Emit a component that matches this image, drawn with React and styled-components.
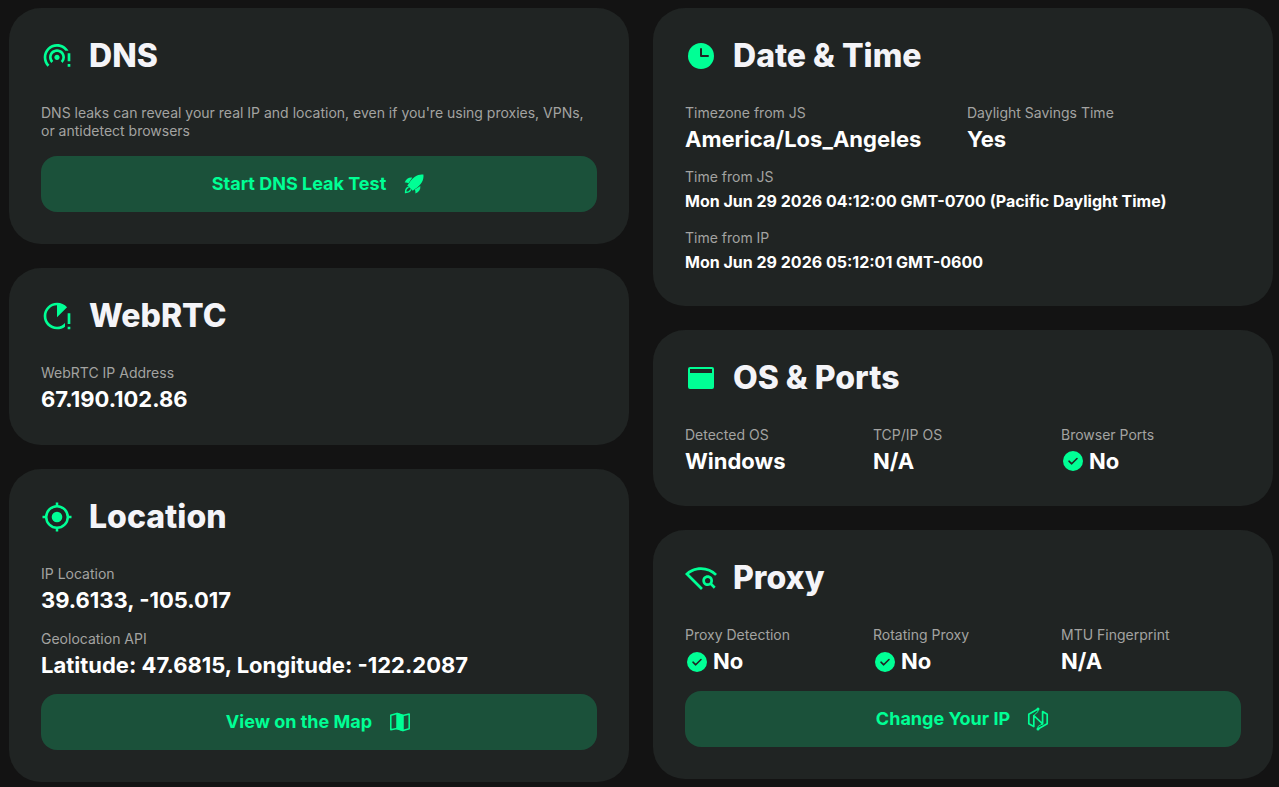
import React from "react";
import styled, { createGlobalStyle } from "styled-components";
import {
  MdOutlineWifiTetheringErrorRounded,
  MdRunningWithErrors,
  MdOutlineWifiFind,
} from "react-icons/md";

const GlobalStyle = createGlobalStyle`
  *, *::before, *::after { box-sizing: border-box; }
  body {
    margin: 0;
    background: #131313;
    color: #fff;
    font-family: Inter, "Liberation Sans", sans-serif;
  }
`;

const Page = styled.main`
  display: grid;
  grid-template-columns: repeat(2, minmax(0, 1fr));
  gap: 24px;
  align-items: start;
  padding: 8px 6px 4px 9px;
`;

const Column = styled.div`
  display: flex;
  flex-direction: column;
  gap: 24px;
`;

const Card = styled.section`
  display: flex;
  flex-direction: column;
  gap: 16px;
  padding: 32px;
  border-radius: 32px;
  background: #202423;
`;

const CardHeader = styled.header`
  display: flex;
  align-items: center;
  gap: 16px;
  height: 32px;
  margin-bottom: 16px;
  color: #00ff95;
  svg {
    flex: none;
    width: 32px;
    height: 32px;
  }
`;

const Title = styled.h2`
  margin: 0;
  color: #f4f4f8;
  font-size: 32px;
  line-height: 32px;
  font-weight: 800;
`;

const Fields = styled.dl`
  display: grid;
  grid-template-columns: repeat(${(p) => p.$columns || 1}, minmax(0, 1fr));
  gap: 16px 8px;
  margin: 0;
`;

const Muted = styled.p`
  margin: 0;
  color: #a3a3a1;
  font-size: 14px;
  line-height: 18px;
`;

const FieldValue = styled.dd`
  display: flex;
  align-items: center;
  gap: 4px;
  margin: 4px 0 0;
  font-size: ${(p) => (p.$small ? 16 : 22)}px;
  line-height: ${(p) => (p.$small ? 23 : p.$tight ? 26 : 27)}px;
  font-weight: 700;
  svg {
    flex: none;
    width: 24px;
    height: 24px;
  }
`;

const Action = styled.button`
  display: flex;
  align-items: center;
  justify-content: center;
  gap: 16px;
  width: 100%;
  height: 56px;
  padding: 0 16px;
  border: 0;
  border-radius: 16px;
  background: #1b513a;
  color: #00ff95;
  font: 700 18px/24px Inter, "Liberation Sans", sans-serif;
  cursor: pointer;
  svg {
    flex: none;
    width: 24px;
    height: 24px;
  }
`;

const LocationIcon = () => (
  <svg viewBox="0 0 32 32" fill="none" stroke="currentColor" aria-hidden="true">
    <circle cx="16" cy="16" r="10.8" strokeWidth="2.5" />
    <circle cx="16" cy="16" r="5.3" fill="currentColor" stroke="none" />
    <path d="M16 1.500v4M16 26.500v4M1.500 16h4M26.500 16h4" strokeWidth="2.500" />
  </svg>
);

const ClockIcon = () => (
  <svg viewBox="0 0 32 32" fill="none" aria-hidden="true">
    <circle cx="16" cy="16" r="13" fill="currentColor" />
    <path d="M16 9v7h7" stroke="#202423" strokeWidth="2" strokeLinecap="round" strokeLinejoin="round" />
  </svg>
);

const WindowIcon = () => (
  <svg viewBox="0 0 32 32" aria-hidden="true">
    <path
      fill="currentColor"
      fillRule="evenodd"
      d="M5 5h22a2 2 0 0 1 2 2v18a2 2 0 0 1-2 2H5a2 2 0 0 1-2-2V7a2 2 0 0 1 2-2zm0 2v4h22V7z"
    />
  </svg>
);

const CheckIcon = () => (
  <svg viewBox="0 0 24 24" fill="none" aria-hidden="true">
    <circle cx="12" cy="12" r="10" fill="#00ff95" />
    <path d="M8 12.2l2.7 2.6L16 9.5" stroke="#202423" strokeWidth="1.600" strokeLinecap="round" strokeLinejoin="round" />
  </svg>
);

const RocketIcon = () => (
  <svg viewBox="0 0 24 24" fill="currentColor" aria-hidden="true">
    <path d="M21.400 2.600C16 1.900 11 4.700 7 11.200l-1.700 2.200 5.500 5.400 2.200-1.700C19.400 13 22.100 8 21.400 2.600z" />
    <path d="M10.200 5.700C6.800 5.200 4.200 7 2.700 10.600c1.400-.2 2.700 0 3.800.6zM18.300 13.900c.5 3.400-1.300 6-4.900 7.500.2-1.400 0-2.700-.6-3.800z" />
    <path d="M6.100 15.500c-1.600.5-2.500 2.500-2.500 4.900 2.400 0 4.400-.9 4.900-2.500" fill="none" stroke="currentColor" strokeWidth="1.500" strokeLinecap="round" />
  </svg>
);

const MapIcon = () => (
  <svg viewBox="0 0 24 24" fill="none" stroke="currentColor" strokeWidth="1.500" strokeLinejoin="round" aria-hidden="true">
    <path d="M2.800 5.200L9 3.500l6 2 6.200-1.400v14.700L15 20.500l-6-2-6.200 1.200z" />
    <path d="M9 3.500l6 2v15l-6-2z" fill="currentColor" />
  </svg>
);

const NodeIcon = () => (
  <svg viewBox="0 0 24 24" fill="none" stroke="currentColor" strokeWidth="1.700" strokeLinejoin="round" aria-hidden="true">
    <path d="M12 2L2.800 7.200v9.600l5 2.700V8.500l8.800 8.300V4.500l4.600 2.700v9.600L12 22" />
    <path d="M12 2v2.500l-4.200 4M12 22v-2.500l4.600-2.700" strokeWidth="1" />
    <circle cx="12" cy="2" r="1.500" fill="currentColor" stroke="none" />
    <circle cx="12" cy="22" r="1.500" fill="currentColor" stroke="none" />
  </svg>
);

function Field({ label, children, small, tight, checked }) {
  return (
    <div>
      <Muted as="dt">{label}</Muted>
      <FieldValue $small={small} $tight={tight}>
        {checked && <CheckIcon />}
        {children}
      </FieldValue>
    </div>
  );
}

function InfoCard({ icon, title, children }) {
  return (
    <Card>
      <CardHeader>
        {icon}
        <Title>{title}</Title>
      </CardHeader>
      {children}
    </Card>
  );
}

export default function App() {
  return (
    <>
      <GlobalStyle />
      <Page>
        <Column>
          <InfoCard icon={<MdOutlineWifiTetheringErrorRounded />} title="DNS">
            <Muted>
              DNS leaks can reveal your real IP and location, even if you're using proxies, VPNs, or antidetect browsers
            </Muted>
            <Action type="button">
              Start DNS Leak Test <RocketIcon />
            </Action>
          </InfoCard>
          <InfoCard icon={<MdRunningWithErrors />} title="WebRTC">
            <Fields>
              <Field label="WebRTC IP Address">67.190.102.86</Field>
            </Fields>
          </InfoCard>
          <InfoCard icon={<LocationIcon />} title="Location">
            <Fields>
              <Field label="IP Location">39.6133, -105.017</Field>
              <Field tight label="Geolocation API">Latitude: 47.6815, Longitude: -122.2087</Field>
            </Fields>
            <Action type="button">
              View on the Map <MapIcon />
            </Action>
          </InfoCard>
        </Column>
        <Column>
          <InfoCard icon={<ClockIcon />} title="Date & Time">
            <Fields $columns={2}>
              <Field tight label="Timezone from JS">America/Los_Angeles</Field>
              <Field tight label="Daylight Savings Time">Yes</Field>
            </Fields>
            <Fields>
              <Field small label="Time from JS">Mon Jun 29 2026 04:12:00 GMT-0700 (Pacific Daylight Time)</Field>
              <Field small label="Time from IP">Mon Jun 29 2026 05:12:01 GMT-0600</Field>
            </Fields>
          </InfoCard>
          <InfoCard icon={<WindowIcon />} title="OS & Ports">
            <Fields $columns={3}>
              <Field tight label="Detected OS">Windows</Field>
              <Field tight label="TCP/IP OS">N/A</Field>
              <Field tight checked label="Browser Ports">No</Field>
            </Fields>
          </InfoCard>
          <InfoCard icon={<MdOutlineWifiFind />} title="Proxy">
            <Fields $columns={3}>
              <Field checked label="Proxy Detection">No</Field>
              <Field checked label="Rotating Proxy">No</Field>
              <Field label="MTU Fingerprint">N/A</Field>
            </Fields>
            <Action type="button">
              Change Your IP <NodeIcon />
            </Action>
          </InfoCard>
        </Column>
      </Page>
    </>
  );
}
